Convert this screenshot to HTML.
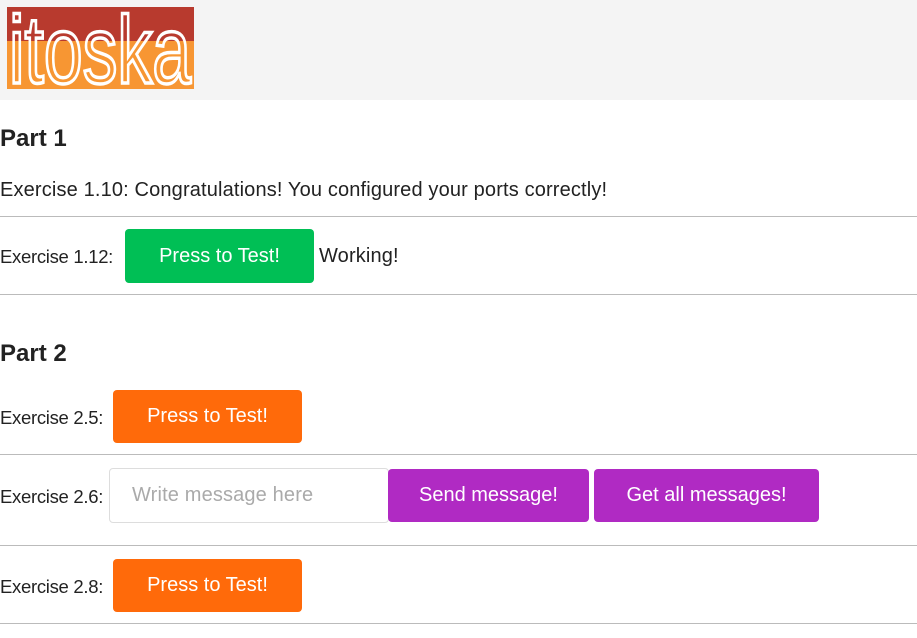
<!DOCTYPE html><html><head><style>
body{margin:0;width:917px;height:638px;overflow:hidden;background:#fff;font-family:"Liberation Sans",sans-serif;color:#222;position:relative}
.a{position:absolute}
.hd{left:0;top:0;width:917px;height:100px;background:#f4f4f4}
.t{font-size:20px;letter-spacing:0.15px;white-space:nowrap}
.l{font-size:18.5px;letter-spacing:-0.3px}
h2{margin:0;font-size:24px;font-weight:bold;position:absolute}
.ln{left:0;width:917px;height:1px;background:#bbb}
.b{color:#fff;font-size:20px;display:flex;align-items:center;justify-content:center;border-radius:4px}
.g{background:#00bf55}.o{background:#ff6a0a}.p{background:#b02ac3}
</style></head><body>
<div class="a hd"></div>
<svg class="a" style="left:7px;top:7px" width="187" height="82">
<rect x="0" y="0" width="187" height="34" fill="#b83a2e"/>
<rect x="0" y="34" width="187" height="48" fill="#f79633"/>
<text x="2" y="76" font-family="Liberation Sans" font-size="96" fill="none" stroke="#fff" stroke-width="3.5" textLength="182" lengthAdjust="spacingAndGlyphs">itoska</text>
</svg>
<h2 style="left:0;top:125px">Part 1</h2>
<div class="a t" style="left:0;top:179px">Exercise 1.10: Congratulations! You configured your ports correctly!</div>
<div class="a ln" style="top:216px"></div>
<div class="a t l" style="left:0;top:246px">Exercise 1.12:</div>
<div class="a b g" style="left:125px;top:229px;width:189px;height:54px">Press to Test!</div>
<div class="a t" style="left:319px;top:245px">Working!</div>
<div class="a ln" style="top:294px"></div>
<h2 style="left:0;top:340px">Part 2</h2>
<div class="a t l" style="left:0;top:407px">Exercise 2.5:</div>
<div class="a b o" style="left:113px;top:390px;width:189px;height:53px">Press to Test!</div>
<div class="a ln" style="top:454px"></div>
<div class="a t l" style="left:0;top:486px">Exercise 2.6:</div>
<div class="a t" style="left:109px;top:468px;width:256px;height:53px;border:1px solid #ddd;border-radius:4px;color:#aaa;line-height:53px;padding-left:22px;background:#fff">Write message here</div>
<div class="a b p" style="left:388px;top:469px;width:201px;height:53px">Send message!</div>
<div class="a b p" style="left:594px;top:469px;width:225px;height:53px">Get all messages!</div>
<div class="a ln" style="top:545px"></div>
<div class="a t l" style="left:0;top:576px">Exercise 2.8:</div>
<div class="a b o" style="left:113px;top:559px;width:189px;height:53px">Press to Test!</div>
<div class="a ln" style="top:623px"></div>
</body></html>
